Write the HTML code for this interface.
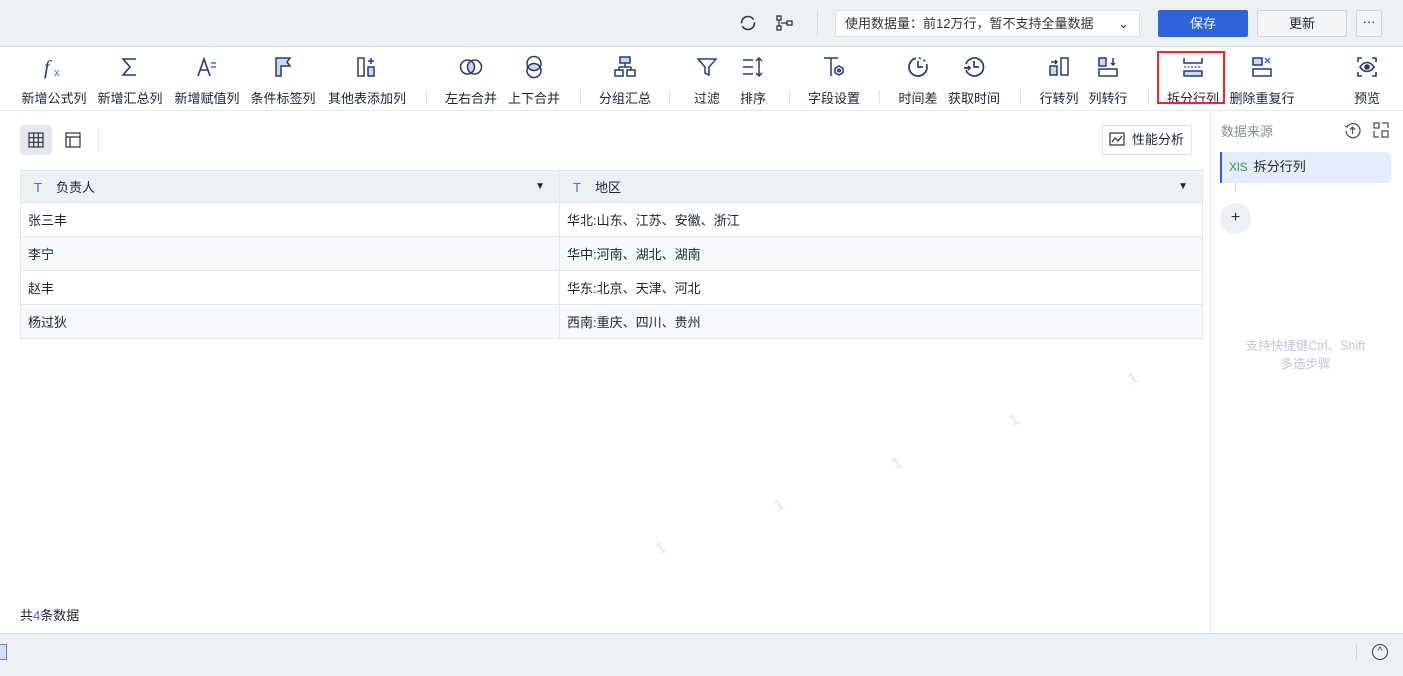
<!DOCTYPE html>
<html><head><meta charset="utf-8"><style>
*{margin:0;padding:0;box-sizing:border-box}
body{width:1403px;height:676px;position:relative;overflow:hidden;background:#fff;font-family:"Liberation Sans","Noto Sans CJK SC",sans-serif;font-size:13px;color:#1f2333}
.abs{position:absolute}
.top{left:0;top:0;width:1403px;height:47px;background:#edf0f5;border-bottom:1px solid #dfe3ea}
.tb{left:0;top:47px;width:1403px;height:64px;background:#fff;border-bottom:1px solid #e3e6ec}
.it{position:absolute;top:0;width:90px;margin-left:-45px;text-align:center}
.it svg{position:absolute;left:33px;top:8px}
.it span{position:absolute;top:41px;left:0;width:90px;text-align:center;font-size:13px;color:#1f2333;white-space:nowrap}
.sep{position:absolute;top:43px;width:1px;height:14px;background:#dcdfe6}
.right{left:1210px;top:111px;width:193px;height:522px;border-left:1px solid #e3e6ec;background:#fff}
.bot{left:0;top:633px;width:1403px;height:43px;background:#edf0f5;border-top:1px solid #d8dce3}
table{border-collapse:collapse;position:absolute;left:20px;top:170px;width:1183px}
td{border:1px solid #e3e6ec;height:34px;padding:0 7px;font-size:13px}
tr.h td{background:#edf0f5;height:32px}
tr:nth-child(odd):not(.h) td{background:#f6f8fb}
</style></head><body>
<div class="abs top">
 <svg class="abs" style="left:739px;top:14px" width="18" height="18" viewBox="0 0 18 18"><circle cx="9" cy="9" r="6.5" fill="none" stroke="#333" stroke-width="1.6" stroke-dasharray="17 3"/></svg>
 <svg class="abs" style="left:776px;top:14px" width="18" height="18" viewBox="0 0 18 18" fill="none" stroke="#333" stroke-width="1.3"><rect x="1" y="2" width="4" height="4"/><rect x="1" y="12" width="4" height="4"/><rect x="11" y="7" width="5" height="4"/><path d="M3 6v6M5 9h6"/></svg>
 <div class="abs" style="left:817px;top:10px;width:1px;height:26px;background:#d5d9e0"></div>
 <div class="abs" style="left:835px;top:10px;width:305px;height:27px;background:#fff;border:1px solid #dcdfe6;border-radius:2px;font-size:13px;line-height:25px;padding-left:9px;color:#333">使用数据量：前12万行，暂不支持全量数据<span style="position:absolute;right:10px;top:0">&#8964;</span></div>
 <div class="abs" style="left:1158px;top:10px;width:90px;height:27px;background:#2e63d9;color:#fff;border-radius:2px;text-align:center;line-height:27px;font-size:13px">保存</div>
 <div class="abs" style="left:1257px;top:10px;width:90px;height:27px;background:#f3f4f6;border:1px solid #cfd3da;border-radius:2px;text-align:center;line-height:25px;font-size:13px">更新</div>
 <div class="abs" style="left:1356px;top:10px;width:26px;height:27px;background:#f3f4f6;border:1px solid #cfd3da;border-radius:2px;text-align:center;line-height:22px;font-size:13px">···</div>
</div>
<div class="abs tb">
 <div class="it" style="left:54px"><svg width="24" height="24" viewBox="0 0 24 24"><text x="2" y="19" font-family="Liberation Serif" font-style="italic" font-size="20" fill="#2b3a6b">f</text><text x="12" y="21" font-size="11" fill="#3f6fd8">x</text></svg><span>新增公式列</span></div>
 <div class="it" style="left:130px"><svg width="24" height="24" viewBox="0 0 24 24"><path d="M18 4H5l7 8-7 8h13" fill="none" stroke="#2b3a6b" stroke-width="1.6"/></svg><span>新增汇总列</span></div>
 <div class="it" style="left:207px"><svg width="24" height="24" viewBox="0 0 24 24" fill="none" stroke="#2b3a6b" stroke-width="1.6"><path d="M3 21L9 4l6 17M5.5 15h7"/><path d="M16 8h5M16 12h5" stroke="#3f6fd8"/></svg><span>新增赋值列</span></div>
 <div class="it" style="left:283px"><svg width="24" height="24" viewBox="0 0 24 24"><path d="M5 3h14l-3 4 3 4H10v10H5z" fill="#c8d8f5" stroke="#2b3a6b" stroke-width="1.5"/></svg><span>条件标签列</span></div>
 <div class="it" style="left:367px"><svg width="24" height="24" viewBox="0 0 24 24" fill="none" stroke="#2b3a6b" stroke-width="1.5"><rect x="3" y="3" width="6" height="18"/><rect x="13" y="12" width="6" height="9" fill="#c8d8f5"/><path d="M16 3v6M13 6h6"/></svg><span>其他表添加列</span></div>
 <div class="sep" style="left:426px"></div>
 <div class="it" style="left:471px"><svg width="24" height="24" viewBox="0 0 24 24" fill="none" stroke="#2b3a6b" stroke-width="1.5"><ellipse cx="12" cy="12" rx="3" ry="6" fill="#c8d8f5" stroke="none"/><circle cx="8.5" cy="12" r="7"/><circle cx="15.5" cy="12" r="7"/></svg><span>左右合并</span></div>
 <div class="it" style="left:534px"><svg width="24" height="24" viewBox="0 0 24 24" fill="none" stroke="#2b3a6b" stroke-width="1.5"><ellipse cx="12" cy="12" rx="6" ry="3" fill="#c8d8f5" stroke="none"/><circle cx="12" cy="8.5" r="7"/><circle cx="12" cy="15.5" r="7"/></svg><span>上下合并</span></div>
 <div class="sep" style="left:580px"></div>
 <div class="it" style="left:625px"><svg width="24" height="24" viewBox="0 0 24 24" fill="none" stroke="#2b3a6b" stroke-width="1.5"><rect x="7" y="2" width="10" height="6" fill="#c8d8f5"/><path d="M12 8v4M6 12h12M6 12v3M18 12v3"/><rect x="2" y="15" width="8" height="6"/><rect x="14" y="15" width="8" height="6"/></svg><span>分组汇总</span></div>
 <div class="sep" style="left:669px"></div>
 <div class="it" style="left:707px"><svg width="24" height="24" viewBox="0 0 24 24"><path d="M3 4h18l-7 8v8l-4-2v-6z" fill="none" stroke="#2b3a6b" stroke-width="1.5"/></svg><span>过滤</span></div>
 <div class="it" style="left:753px"><svg width="24" height="24" viewBox="0 0 24 24" fill="none" stroke="#2b3a6b" stroke-width="1.5"><path d="M2 5h10M2 12h10M2 19h10M18 3v18M15 6l3-3 3 3M15 18l3 3 3-3"/></svg><span>排序</span></div>
 <div class="sep" style="left:789px"></div>
 <div class="it" style="left:834px"><svg width="24" height="24" viewBox="0 0 24 24" fill="none" stroke="#2b3a6b" stroke-width="1.5"><path d="M2 3h14M9 3v18"/><path d="M17 11l4 2.3v4.4L17 20l-4-2.3v-4.4z"/><circle cx="17" cy="15.5" r="1.3"/></svg><span>字段设置</span></div>
 <div class="sep" style="left:879px"></div>
 <div class="it" style="left:918px"><svg width="24" height="24" viewBox="0 0 24 24" fill="none" stroke="#2b3a6b" stroke-width="1.7"><circle cx="12" cy="12" r="9" stroke-dasharray="40 3 2 3 2 3"/><path d="M12 6v6h5"/></svg><span>时间差</span></div>
 <div class="it" style="left:974px"><svg width="24" height="24" viewBox="0 0 24 24" fill="none" stroke="#2b3a6b" stroke-width="1.7"><path d="M4 15A9 9 0 1 0 4 9"/><path d="M12 6v6h5M2 13h6M6 11l2 2-2 2"/></svg><span>获取时间</span></div>
 <div class="sep" style="left:1020px"></div>
 <div class="it" style="left:1059px"><svg width="24" height="24" viewBox="0 0 24 24" fill="none" stroke="#2b3a6b" stroke-width="1.5"><rect x="3" y="11" width="7" height="9" fill="#c8d8f5"/><rect x="14" y="3" width="7" height="17"/><path d="M4 7h6M8 5l2 2-2 2"/></svg><span>行转列</span></div>
 <div class="it" style="left:1108px"><svg width="24" height="24" viewBox="0 0 24 24" fill="none" stroke="#2b3a6b" stroke-width="1.5"><rect x="3" y="3" width="7" height="8" fill="#c8d8f5"/><rect x="3" y="14" width="18" height="7"/><path d="M17 3v7M15 8l2 2 2-2"/></svg><span>列转行</span></div>
 <div class="sep" style="left:1148px"></div>
 <div class="it" style="left:1193px"><svg width="24" height="24" viewBox="0 0 24 24" fill="none" stroke="#2b3a6b" stroke-width="1.5"><path d="M3 3v5h18V3"/><rect x="3" y="16" width="18" height="5" fill="#c8d8f5"/><path d="M3 12h18" stroke="#3f6fd8" stroke-dasharray="2 1.5"/></svg><span>拆分行列</span></div>
 <div class="abs" style="left:1157px;top:4px;width:68px;height:53px;border:2px solid #f0262b"></div>
 <div class="it" style="left:1262px"><svg width="24" height="24" viewBox="0 0 24 24" fill="none" stroke="#2b3a6b" stroke-width="1.5"><rect x="3" y="3" width="9" height="7" fill="#c8d8f5"/><rect x="3" y="14" width="18" height="7"/><path d="M15 3l5 5M20 3l-5 5" stroke="#3f6fd8"/></svg><span>删除重复行</span></div>
 <div class="it" style="left:1367px"><svg width="24" height="24" viewBox="0 0 24 24" fill="none" stroke="#2b3a6b" stroke-width="1.6"><path d="M3 7V3h4M17 3h4v4M21 17v4h-4M7 21H3v-4"/><path d="M5 12c4-6 10-6 14 0-4 6-10 6-14 0z"/><circle cx="12" cy="12" r="2" fill="#2b3a6b"/></svg><span>预览</span></div>
</div>
<div class="abs" style="left:20px;top:125px;width:32px;height:30px;background:#e5e8ee;border-radius:3px"></div>
<svg class="abs" style="left:28px;top:132px" width="16" height="16" viewBox="0 0 16 16" fill="none" stroke="#2b2f3a" stroke-width="1.2"><rect x="1" y="1" width="14" height="14"/><path d="M1 5.7h14M1 10.3h14M5.7 1v14M10.3 1v14"/></svg>
<svg class="abs" style="left:65px;top:132px" width="16" height="16" viewBox="0 0 16 16" fill="none" stroke="#2b2f3a" stroke-width="1.2"><rect x="1" y="1" width="14" height="14"/><path d="M1 5h14M5 5v10"/></svg>
<div class="abs" style="left:98px;top:128px;width:1px;height:24px;background:#e3e6ec"></div>
<div class="abs" style="left:1102px;top:125px;width:90px;height:30px;border:1px solid #dcdfe6;border-radius:2px;font-size:13px;line-height:28px;padding-left:29px">性能分析</div>
<svg class="abs" style="left:1109px;top:132px" width="16" height="16" viewBox="0 0 16 16" fill="none" stroke="#2b2f3a" stroke-width="1.2"><rect x="1" y="1" width="14" height="12"/><path d="M3 10l3-4 3 3 4-5"/></svg>
<table>
<tr class="h"><td style="width:539px;position:relative"><span style="color:#3f6fd8;margin:0 14px 0 6px">T</span>负责人<span style="position:absolute;right:14px;top:10px;font-size:10px">▼</span></td><td style="position:relative"><span style="color:#3f6fd8;margin:0 14px 0 6px">T</span>地区<span style="position:absolute;right:14px;top:10px;font-size:10px">▼</span></td></tr>
<tr><td>张三丰</td><td>华北:山东、江苏、安徽、浙江</td></tr>
<tr><td>李宁</td><td>华中:河南、湖北、湖南</td></tr>
<tr><td>赵丰</td><td>华东:北京、天津、河北</td></tr>
<tr><td>杨过狄</td><td>西南:重庆、四川、贵州</td></tr>
</table>
<div class="abs" style="left:20px;top:605px;font-size:13px">共<span style="color:#3f6fd8">4</span>条数据</div>
<div class="abs" style="left:1129px;top:370px;color:#e8eaee;font-weight:bold;font-size:16px;transform:rotate(-30deg)">1</div>
<div class="abs" style="left:1010px;top:412px;color:#e8eaee;font-weight:bold;font-size:16px;transform:rotate(-30deg)">1</div>
<div class="abs" style="left:893px;top:455px;color:#e8eaee;font-weight:bold;font-size:16px;transform:rotate(-30deg)">1</div>
<div class="abs" style="left:775px;top:497px;color:#e8eaee;font-weight:bold;font-size:16px;transform:rotate(-30deg)">1</div>
<div class="abs" style="left:657px;top:540px;color:#e8eaee;font-weight:bold;font-size:16px;transform:rotate(-30deg)">1</div>
<div class="abs right">
 <div class="abs" style="left:10px;top:10px;color:#8a8f99;font-size:13px">数据来源</div>
 <svg class="abs" style="left:133px;top:11px" width="17" height="17" viewBox="0 0 17 17" fill="none" stroke="#555" stroke-width="1.3"><path d="M3 5a7 7 0 1 1-1 4"/><path d="M1 4l2 1 1-2"/><path d="M8.5 12V5M6 7.5l2.5-2.5 2.5 2.5"/></svg>
 <svg class="abs" style="left:162px;top:11px" width="16" height="16" viewBox="0 0 16 16" fill="none" stroke="#555" stroke-width="1.3"><rect x="1" y="1" width="5" height="5"/><rect x="9" y="9" width="6" height="6"/><path d="M1 9v6h5M9 1h6v5"/></svg>
 <div class="abs" style="left:9px;top:41px;width:171px;height:31px;background:#e3edfc;border-left:2px solid #2e63d9;border-radius:0 4px 4px 0;line-height:30px;padding-left:7px;font-size:13px"><span style="color:#2e9a4a;font-size:12px;margin-right:6px">XlS</span>拆分行列</div>
 <div class="abs" style="left:24px;top:72px;width:1px;height:9px;background:#cfd3da"></div>
 <div class="abs" style="left:9px;top:92px;width:31px;height:31px;border-radius:50%;background:#edf0f5;text-align:center;line-height:30px;font-size:16px;color:#333">+</div>
 <div class="abs" style="left:-2px;top:226px;width:193px;text-align:center;color:#c3c7ce;font-size:12.5px;line-height:18px">支持快捷键Ctrl、Shift<br>多选步骤</div>
</div>
<div class="abs bot">
 <div class="abs" style="left:0;top:10px;width:7px;height:16px;border:1px solid #6c82c4;border-left:none;background:#d5e0f5"></div>
 <div class="abs" style="left:1356px;top:10px;width:1px;height:16px;background:#cfd3da"></div>
 <div class="abs" style="left:1372px;top:10px;width:16px;height:16px;border:1.5px solid #333;border-radius:50%;text-align:center;font-size:10px;line-height:14px">^</div>
</div>
</body></html>
